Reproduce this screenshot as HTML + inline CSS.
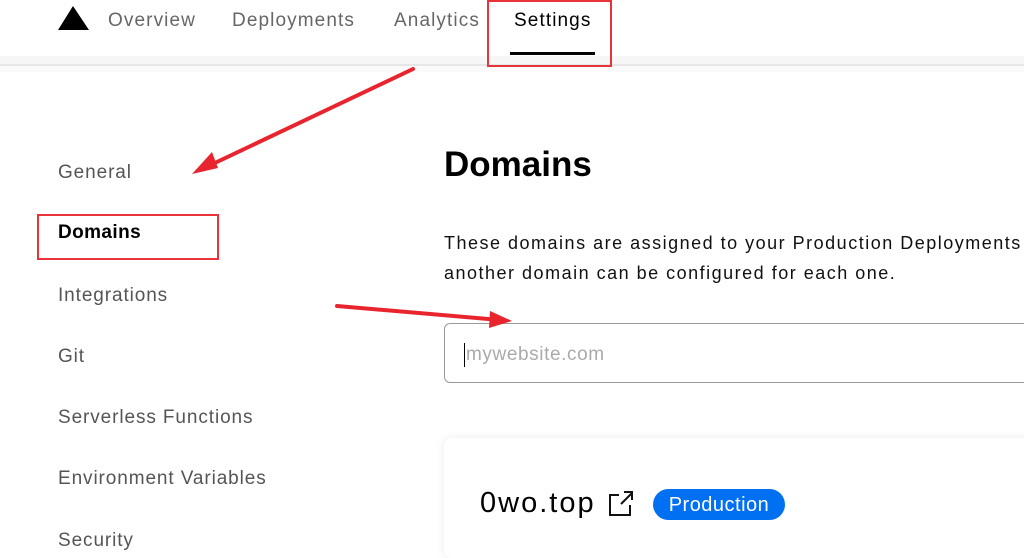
<!DOCTYPE html>
<html><head><style>
body{margin:0;width:1024px;height:541px;overflow:hidden;background:#fff;font-family:"Liberation Sans",sans-serif;position:relative}
.a{position:absolute;white-space:nowrap}
.nav{font-size:19px;color:#666;top:10px;letter-spacing:1.1px}
.side{font-size:19px;color:#555;left:58px;letter-spacing:0.9px}
</style></head><body>
<div class="a" style="left:0;top:56px;width:1024px;height:8px;background:#f6f6f6"></div>
<div class="a" style="left:0;top:64px;width:1024px;height:2px;background:#e6e6e6"></div>
<div class="a" style="left:0;top:66px;width:1024px;height:6px;background:#fafafa"></div>
<svg class="a" style="left:57px;top:5px" width="33" height="26"><polygon points="16,1 32,25 1,25" fill="#000"/></svg>
<div class="a nav" style="left:108px">Overview</div>
<div class="a nav" style="left:232px">Deployments</div>
<div class="a nav" style="left:394px">Analytics</div>
<div class="a nav" style="left:514px;color:#000">Settings</div>
<div class="a" style="left:510px;top:52px;width:85px;height:3px;background:#000"></div>
<div class="a" style="left:487px;top:0;width:125px;height:67px;border:2px solid #e8333b;box-sizing:border-box"></div>
<div class="a side" style="top:162px">General</div>
<div class="a side" style="top:222px;color:#000;font-weight:bold;letter-spacing:0.4px">Domains</div>
<div class="a" style="left:37px;top:214px;width:182px;height:46px;border:2px solid #e8333b;box-sizing:border-box"></div>
<div class="a side" style="top:285px">Integrations</div>
<div class="a side" style="top:346px">Git</div>
<div class="a side" style="top:407px">Serverless Functions</div>
<div class="a side" style="top:468px">Environment Variables</div>
<div class="a side" style="top:530px">Security</div>
<div class="a" style="left:444px;top:145px;font-size:35px;font-weight:bold;color:#000">Domains</div>
<div class="a" style="left:444px;top:228px;font-size:18px;color:#111;line-height:30px;letter-spacing:1.5px">These domains are assigned to your Production Deployments<br>another domain can be configured for each one.</div>
<div class="a" style="left:444px;top:323px;width:600px;height:60px;border:1px solid #999;border-radius:6px;box-sizing:border-box"></div>
<div class="a" style="left:464px;top:343px;width:1px;height:24px;background:#000"></div>
<div class="a" style="left:466px;top:344px;font-size:19px;color:#aaa;letter-spacing:0.6px">mywebsite.com</div>
<div class="a" style="left:444px;top:438px;width:600px;height:120px;background:#fff;border-radius:8px;box-shadow:0 0 10px rgba(0,0,0,.08)"></div>
<div class="a" style="left:480px;top:487px;font-size:29px;color:#000;letter-spacing:2px">0wo.top</div>
<svg class="a" style="left:608px;top:490px" width="26" height="28" fill="none" stroke="#111" stroke-width="2"><path d="M11 5H2v20h20V15"/><path d="M13 14L24 3M16 2h8v8"/></svg>
<div class="a" style="left:653px;top:489px;width:132px;height:31px;background:#0070f3;border-radius:16px;color:#fff;font-size:20px;line-height:33px;text-align:center;letter-spacing:0.5px">Production</div>
<svg class="a" style="left:0;top:0" width="1024" height="541"><g stroke="#e8252f" stroke-width="4" fill="none" stroke-linecap="round"><path d="M413 69L200 170"/><path d="M337 306L500 320"/></g><polygon points="192,174 212,152 218,168" fill="#e8252f"/><polygon points="512,321 490,311 489,328" fill="#e8252f"/></svg>
</body></html>
